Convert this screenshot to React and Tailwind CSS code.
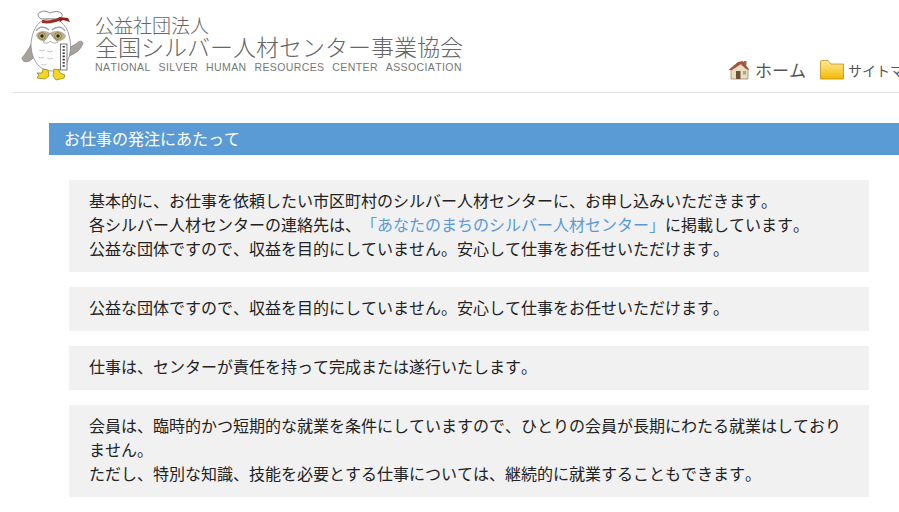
const font = { fontFamily: '"Noto Sans CJK JP", "Liberation Sans", sans-serif' };

// viewBox uses the owl's place in the header, so the numbers read off the picture directly
const Owl = () => (
  <svg width="64" height="72" viewBox="20 9 64 72" className="shrink-0">
    {/* hat */}
    <path d="M42 19 C37 18 37 12 41 12 C44 10 48 12 50 13 C54 11 60 11 62 14 C63 17 60 18 58 19 Z" fill="#fff" stroke="#666" strokeWidth="0.8" />
    {/* wings */}
    <path d="M34 38 C31 46 26 53 22 58 C22 62 27 63 31 60 L37 54 Z" fill="#a8a29b" stroke="#777" strokeWidth="0.6" />
    <path d="M69 56 C75 54 81 50 83 43 C82 40 78 41 76 44 L70 47 Z" fill="#a8a29b" stroke="#777" strokeWidth="0.6" />
    {/* body */}
    <path d="M50 19 C62 19 68 27 70 40 C72 54 68 70 52 71 C38 71 31 58 31 44 C32 30 38 19 50 19 Z" fill="#fff" stroke="#888" strokeWidth="0.8" />
    {/* face mask */}
    <path d="M36 35 C38 30 46 30 50 33 C54 30 63 30 66 36 C64 42 56 42 50 40 C45 42 38 42 36 35 Z" fill="#b9b19c" />
    <circle cx="42" cy="36" r="3.4" fill="#d9c455" stroke="#6b6048" strokeWidth="0.7" />
    <circle cx="58" cy="36" r="3.4" fill="#d9c455" stroke="#6b6048" strokeWidth="0.7" />
    <circle cx="42" cy="36" r="1.7" fill="#222" />
    <circle cx="58" cy="36" r="1.7" fill="#222" />
    {/* brows */}
    <path d="M36 31 C39 26 45 26 49 30 M52 30 C56 26 62 26 65 31" fill="none" stroke="#999" strokeWidth="1.2" />
    {/* beak */}
    <path d="M50 33 C48 36 46 40 43 42 C46 44 49 43 50 41 C52 43 55 44 58 42 C55 40 52 36 50 33 Z" fill="#fff" stroke="#888" strokeWidth="0.7" />
    {/* chest feathers */}
    <path d="M39 50 q3 2 6 0 M47 51 q3 2 6 0 M38 57 q3 2 6 0 M47 58 q3 2 6 0 M41 64 q3 2 6 0" fill="none" stroke="#c4c4c4" strokeWidth="0.9" />
    {/* headband */}
    <path d="M42 20 C48 21 54 20 60 17 L61 20 C55 23 48 24 42 23 Z" fill="#9b2b25" />
    <path d="M59 17 L68 18 L70 22 L63 20 L60 22 Z" fill="#8d231f" />
    {/* sash */}
    <rect x="60.5" y="44" width="6.5" height="26" fill="#fff" stroke="#444" strokeWidth="0.7" />
    <path d="M63.7 46 v22" stroke="#333" strokeWidth="2.2" strokeDasharray="1.6 1.6" />
    {/* feet */}
    <path d="M43 69 L48 70 L49 76 L45 79 L37 78 L39 75 L37 73 L42 73 Z" fill="#f4d820" stroke="#8a7a10" strokeWidth="0.7" />
    <path d="M54 69 L59 70 L60 73 L65 75 L64 78 L56 80 L53 76 Z" fill="#f4d820" stroke="#8a7a10" strokeWidth="0.7" />
  </svg>
);

const HomeIcon = () => (
  <svg width="22" height="20" viewBox="0 0 22 20" className="shrink-0">
    <path d="M3 9 L3 19 L20 19 L20 9 L11 3 Z" fill="#ecdcc0" stroke="#9a8a70" strokeWidth="0.8" />
    <path d="M0.5 10 L10 2 L15 1 L21.5 10 L18 9 L13 4 L4 10 Z" fill="#a8503c" />
    <rect x="16" y="1" width="2.5" height="4" fill="#8a6a50" />
    <rect x="8" y="11" width="4.5" height="8" fill="#6a5238" />
    <rect x="15" y="11" width="3" height="3.5" fill="#8fae9a" />
  </svg>
);

const FolderIcon = () => (
  <svg width="24" height="20" viewBox="0 0 24 20" className="shrink-0">
    <defs>
      <linearGradient id="folder" x1="0" y1="0" x2="0" y2="1">
        <stop offset="0" stopColor="#fdeb98" />
        <stop offset="1" stopColor="#f5b800" />
      </linearGradient>
    </defs>
    <path d="M0.5 19 L0.5 2 Q0.5 0.5 2 0.5 L8 0.5 L11 4 L23.5 4 L23.5 19 Z" fill="url(#folder)" stroke="#b98f20" strokeWidth="0.8" />
  </svg>
);

const blocks = [
  [
    <>基本的に、お仕事を依頼したい市区町村のシルバー人材センターに、お申し込みいただきます。</>,
    <>
      各シルバー人材センターの連絡先は、
      <a href="#" className="text-[#5b9bd5]">「あなたのまちのシルバー人材センター」</a>
      に掲載しています。
    </>,
    <>公益な団体ですので、収益を目的にしていません。安心して仕事をお任せいただけます。</>,
  ],
  [<>公益な団体ですので、収益を目的にしていません。安心して仕事をお任せいただけます。</>],
  [<>仕事は、センターが責任を持って完成または遂行いたします。</>],
  [
    <>会員は、臨時的かつ短期的な就業を条件にしていますので、ひとりの会員が長期にわたる就業はしておりません。</>,
    <>ただし、特別な知識、技能を必要とする仕事については、継続的に就業することもできます。</>,
  ],
];

export default function App() {
  return (
    <div className="h-[512px] w-[899px] overflow-hidden bg-white [font-kerning:none] [text-spacing-trim:space-all]" style={font}>
      <header className="ml-[13px] flex h-[93px] border-b border-[#e0e0e0]">
        <div className="mt-[9px] ml-[7px]">
          <Owl />
        </div>
        <div className="mt-[14px] ml-[11px] w-[367px] shrink-0 text-[#666]">
          <p className="text-[19px] leading-[22px] font-light whitespace-nowrap">公益社団法人</p>
          <p className="text-[23px] leading-[20px] font-light whitespace-nowrap">全国シルバー人材センター事業協会</p>
          <p className="mt-[6px] text-[10.5px] leading-[11px] whitespace-nowrap text-[#777] font-['Liberation_Sans'] tracking-[0.4px] [word-spacing:4.5px]">
            NATIONAL SILVER HUMAN RESOURCES CENTER ASSOCIATION
          </p>
        </div>
        <nav className="mt-[60px] ml-[266px] flex h-[20px] shrink-0 items-center text-[17px] text-[#555]">
          <HomeIcon />
          <span className="ml-[5px] whitespace-nowrap">ホーム</span>
          <span className="ml-[14px]"><FolderIcon /></span>
          <span className="ml-[4px] text-[14px] whitespace-nowrap">サイトマップ</span>
        </nav>
      </header>

      <main className="mt-[30px] ml-[49px]">
        <h2 className="h-[32px] bg-[#5b9bd5] pl-[15px] text-[16px] leading-[30px] font-normal text-white">
          お仕事の発注にあたって
        </h2>
        <div className="mt-[25px] mr-[30px] ml-[20px] flex flex-col gap-[15px]">
          {blocks.map((lines, i) => (
            <div key={i} className="bg-[#f1f1f1] px-[20px] pt-[8px] pb-[12px] text-[16px] leading-[24px] text-[#222]">
              {lines.map((line, j) => (
                <p key={j}>{line}</p>
              ))}
            </div>
          ))}
        </div>
      </main>
    </div>
  );
}
